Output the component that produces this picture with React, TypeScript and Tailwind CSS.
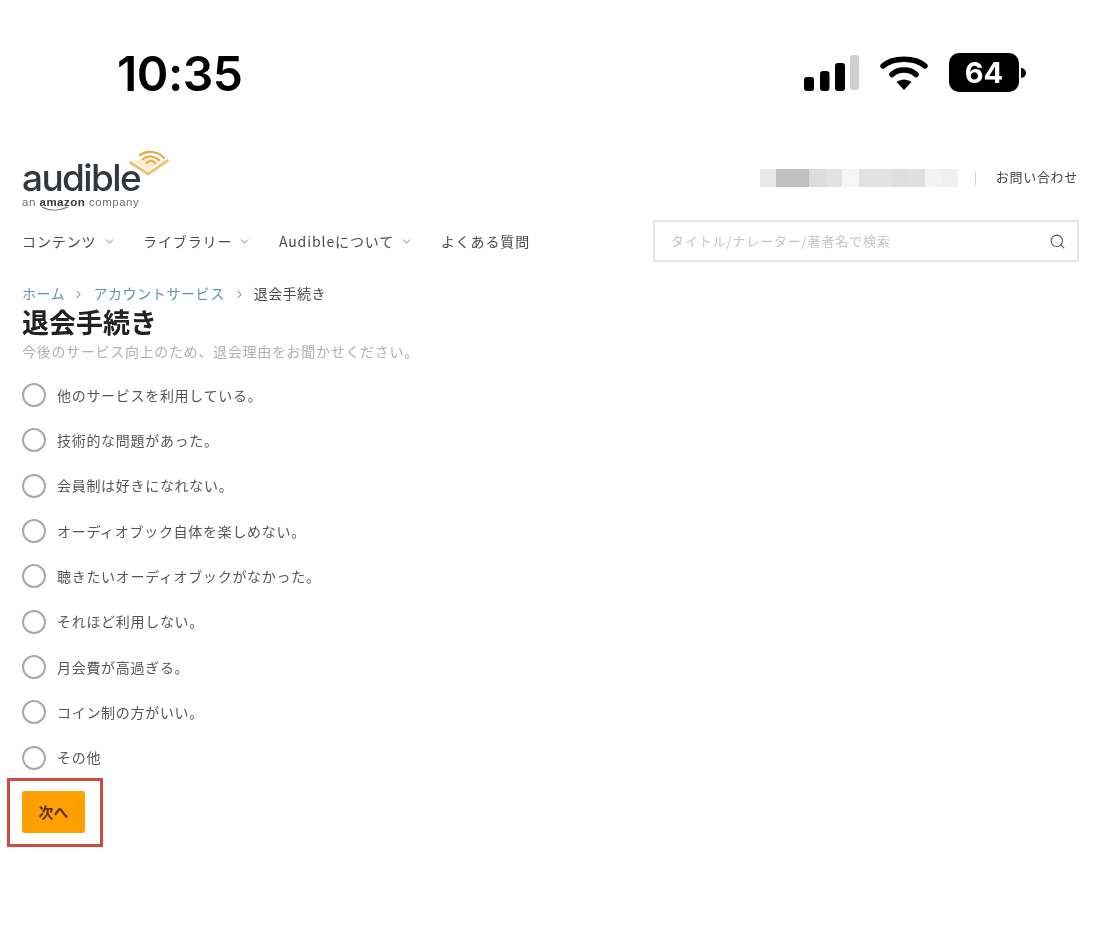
import { ChevronDown, ChevronRight, Search } from 'lucide-react';

const navItems = [
  { label: 'コンテンツ', menu: true },
  { label: 'ライブラリー', menu: true },
  { label: 'Audibleについて', menu: true },
  { label: 'よくある質問', menu: false },
];

const reasons = [
  '他のサービスを利用している。',
  '技術的な問題があった。',
  '会員制は好きになれない。',
  'オーディオブック自体を楽しめない。',
  '聴きたいオーディオブックがなかった。',
  'それほど利用しない。',
  '月会費が高過ぎる。',
  'コイン制の方がいい。',
  'その他',
];

// blurred-out account name in the header
const mosaic = ['#e8e8e8', '#c0c0c0', '#c0c0c0', '#dcdcdc', '#e2e2e2', '#f6f6f6', '#e2e2e2', '#e2e2e2', '#dedede', '#e0e0e0', '#f3f3f3', '#f0f0f0'];

function StatusBar() {
  return (
    <div className="flex h-[146px] items-start justify-between pl-[117px] pr-[74px] pt-[45px]">
      <div className="text-[48px] font-semibold leading-[58px] tracking-[-0.5px] text-black font-['Inter',sans-serif]">10:35</div>
      <div className="mt-[8px] flex items-center">
        <svg width="56" height="38" viewBox="0 0 56 38" className="mr-[20px]">
          <rect x="0" y="23" width="10" height="14" rx="3" fill="#000" />
          <rect x="16" y="17" width="9.500" height="20" rx="3" fill="#000" />
          <rect x="31" y="9" width="10" height="28" rx="3" fill="#000" />
          <rect x="46" y="1" width="9" height="35" rx="3" fill="#cfcfcf" />
        </svg>
        <svg width="48" height="38" viewBox="0 0 48 38" className="mr-[21px]">
          <path d="M3 12 C13 3 35 3 45 12" fill="none" stroke="#000" strokeWidth="5.500" strokeLinecap="round" />
          <path d="M12 20.500 C18 14.500 30 14.500 36 20.500" fill="none" stroke="#000" strokeWidth="5.500" strokeLinecap="round" />
          <path d="M16.500 28 C21 24.500 27 24.500 31.500 28 L24 36 Z" fill="#000" />
        </svg>
        <div className="flex h-[39px] w-[70px] items-center justify-center rounded-[10px] bg-black text-[29px] font-bold text-white font-['Inter',sans-serif]">64</div>
        <div className="ml-[2px] h-[10px] w-[5px] rounded-r-full bg-black" />
      </div>
    </div>
  );
}

function Logo() {
  return (
    <div className="relative h-[60px] w-[150px]">
      <div className="pt-[14px] text-[37px] font-medium leading-[36px] tracking-[-1.600px] text-[#33383c] font-['Inter',sans-serif]">audible</div>
      <div className="text-[11.500px] leading-[12px] tracking-[0.5px] text-[#6f7376] font-['Liberation_Sans',sans-serif]">
        an <b className="text-[#33383c]">amazon</b> company
      </div>
      <svg width="30" height="6" viewBox="0 0 30 6" className="absolute left-[19px] top-[60px]">
        <path d="M1 1 C8 5 18 5 27 1" fill="none" stroke="#6f7376" strokeWidth="1.200" />
      </svg>
      <svg width="42" height="26" viewBox="0 0 42 26" className="absolute left-[106px] top-[4px]">
        <path d="M1.500 12 L20 24 L40.500 10" fill="none" stroke="#f3c272" strokeWidth="3" strokeLinejoin="round" />
        <path d="M6 11 L20 20 L34 11 C26 8 14 8 6 11 Z" fill="#fbeacb" />
        <path d="M12 5 C19 0 30 1 36 8" fill="none" stroke="#eba93f" strokeWidth="2.200" strokeLinecap="round" />
        <path d="M15 9 C20 5 27 6 31 10" fill="none" stroke="#eba93f" strokeWidth="2.200" strokeLinecap="round" />
        <path d="M19 13 C21 10 25 10 27 13" fill="none" stroke="#eba93f" strokeWidth="2.200" strokeLinecap="round" />
      </svg>
    </div>
  );
}

function Header() {
  return (
    <div className="pl-[22px] pr-[21px]">
      <div className="flex items-start justify-between">
        <Logo />
        <div className="mt-[21px] flex items-center">
          <div className="flex h-[18px]">
            {mosaic.map((c, i) => (
              <div key={i} className="h-full w-[16.500px]" style={{ background: c }} />
            ))}
          </div>
          <div className="ml-[17px] h-[14px] w-px bg-[#d4d4d4]" />
          <a className="mb-[2px] ml-[20px] mr-px text-[13px] tracking-[0.7px] text-[#444]">お問い合わせ</a>
        </div>
      </div>
      <div className="mt-[14px] flex items-center justify-between">
        <div className="flex items-center gap-[27.500px]">
          {navItems.map((item) => (
            <div key={item.label} className="flex items-center gap-[6px] text-[14px] tracking-[0.9px] text-[#4a4a4a]">
              {item.label}
              {item.menu && <ChevronDown size={13} strokeWidth={1.5} className="text-[#666]" />}
            </div>
          ))}
        </div>
        <div className="flex h-[42px] w-[426px] items-center justify-between border-2 border-[#e6e6e6] pl-[16px] pr-[11px]">
          <span className="text-[13px] tracking-[0.85px] text-[#c4c4c4]">タイトル/ナレーター/著者名で検索</span>
          <Search size={17} strokeWidth={1.5} className="text-[#555]" />
        </div>
      </div>
    </div>
  );
}

export default function App() {
  return (
    <div className="h-[943px] w-[1100px] overflow-hidden bg-white blur-[0.4px] font-['Noto_Sans_CJK_JP','Noto_Sans',sans-serif]">
      <StatusBar />
      <Header />
      <div className="pl-[22px] pt-[21px]">
        <div className="flex items-center text-[14px] leading-[20px] tracking-[0.6px]">
          <a className="text-[#5b97ab]">ホーム</a>
          <ChevronRight size={13} strokeWidth={1.5} className="ml-[7px] mr-[8px] mt-[2px] text-[#444]" />
          <a className="text-[#5b97ab]">アカウントサービス</a>
          <ChevronRight size={13} strokeWidth={1.5} className="ml-[8px] mr-[8px] mt-[2px] text-[#444]" />
          <span className="tracking-[0.4px] text-[#4a4a4a]">退会手続き</span>
        </div>
        <h1 className="mt-px text-[27px] font-bold leading-[36px] text-[#222]">退会手続き</h1>
        <p className="mt-[1px] text-[14px] leading-[20px] tracking-[0.7px] text-[#b0b0b0]">今後のサービス向上のため、退会理由をお聞かせください。</p>
        <div className="mt-[22px] flex flex-col gap-[21.350px]">
          {reasons.map((r) => (
            <label key={r} className="flex h-[24px] items-center">
              <span className="h-[24px] w-[24px] rounded-full border-2 border-[#a9a9a9]" />
              <span className="ml-[11px] text-[14px] tracking-[0.7px] text-[#555]">{r}</span>
            </label>
          ))}
        </div>
        <div className="ml-[-15px] mt-[8px] flex h-[69px] w-[96px] items-center border-[3px] border-[#cf4a40] pl-[12px]">
          <button className="h-[42px] w-[63px] rounded-[3px] bg-[#ff9f00] text-[15px] font-bold text-[#5a3200]">次へ</button>
        </div>
      </div>
    </div>
  );
}
